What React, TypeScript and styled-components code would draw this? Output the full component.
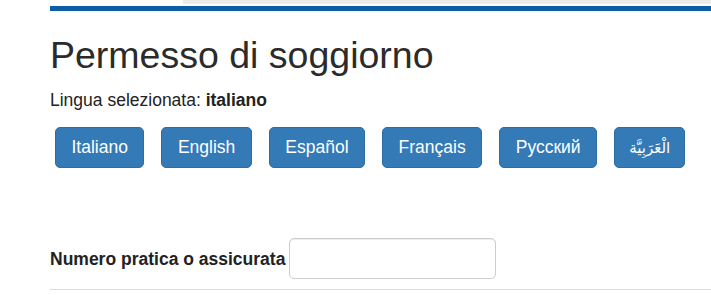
import React from "react";
import styled, { createGlobalStyle } from "styled-components";

const GlobalStyle = createGlobalStyle`
  html, body {
    margin: 0;
    padding: 0;
    background: #ffffff;
  }
  body {
    font-family: "Liberation Sans", Arial, "DejaVu Sans", sans-serif;
    font-size: 17.5px;
    line-height: 25px;
    color: #333333;
    overflow: hidden;
  }
  * { box-sizing: border-box; }
`;

const Page = styled.div`
  padding-left: 50px;
  width: 711px;
`;

const TopStrip = styled.div`
  margin-left: 133px;
  height: 4px;
  background: #ececec;
`;

const BlueRule = styled.div`
  margin-top: 2px;
  height: 5px;
  background: #0c5ea6;
`;

const Title = styled.h1`
  margin: 24px 0 0 0;
  font-size: 37.5px;
  font-weight: 400;
  line-height: 41px;
  color: #2b2b2b;
`;

const Selected = styled.p`
  margin: 12px 0 0 0;
  font-size: 17.5px;
  line-height: 25px;
  color: #222;
  strong { font-weight: 700; }
`;

const ButtonRow = styled.div`
  display: flex;
  gap: 17px;
  margin: 14px 0 0 5px;
`;

const LangButton = styled.button<{ $rtl?: boolean }>`
  height: 41px;
  padding: 0 ${(p) => (p.$rtl ? "14px" : "15.5px")};
  border: 1px solid #2e6da4;
  border-radius: 5px;
  background: #337ab7;
  color: #ffffff;
  font-family: "Liberation Sans", Arial, "DejaVu Sans", sans-serif;
  font-size: ${(p) => (p.$rtl ? "15px" : "17.5px")};
  line-height: 25px;
  cursor: pointer;
  direction: ${(p) => (p.$rtl ? "rtl" : "ltr")};
`;

const FormRow = styled.div`
  display: flex;
  align-items: center;
  gap: 4px;
  margin-top: 70px;
`;

const Label = styled.label`
  font-weight: 700;
  font-size: 17.5px;
  line-height: 25px;
  color: #222;
  padding-top: 2px;
`;

const TextInput = styled.input`
  width: 207px;
  height: 41px;
  border: 1px solid #cccccc;
  border-radius: 5px;
  box-shadow: inset 0 1px 1px rgba(0, 0, 0, 0.075);
  padding: 6px 12px;
  font-size: 17.5px;
  font-family: inherit;
  outline: none;
`;

const Divider = styled.hr`
  margin: 10px 0 0 0;
  border: 0;
  border-top: 1px solid #dddddd;
`;

const languages = [
  { label: "Italiano" },
  { label: "English" },
  { label: "Español" },
  { label: "Français" },
  { label: "Русский" },
  { label: "الْعَرَبِيَّة", rtl: true },
];

export default function App() {
  return (
    <>
      <GlobalStyle />
      <Page>
        <TopStrip />
        <BlueRule />
        <Title>Permesso di soggiorno</Title>
        <Selected>
          Lingua selezionata: <strong>italiano</strong>
        </Selected>
        <ButtonRow>
          {languages.map((l) => (
            <LangButton key={l.label} $rtl={l.rtl} lang={l.rtl ? "ar" : undefined}>
              {l.label}
            </LangButton>
          ))}
        </ButtonRow>
        <FormRow>
          <Label htmlFor="numero">Numero pratica o assicurata</Label>
          <TextInput id="numero" type="text" />
        </FormRow>
        <Divider />
      </Page>
    </>
  );
}
